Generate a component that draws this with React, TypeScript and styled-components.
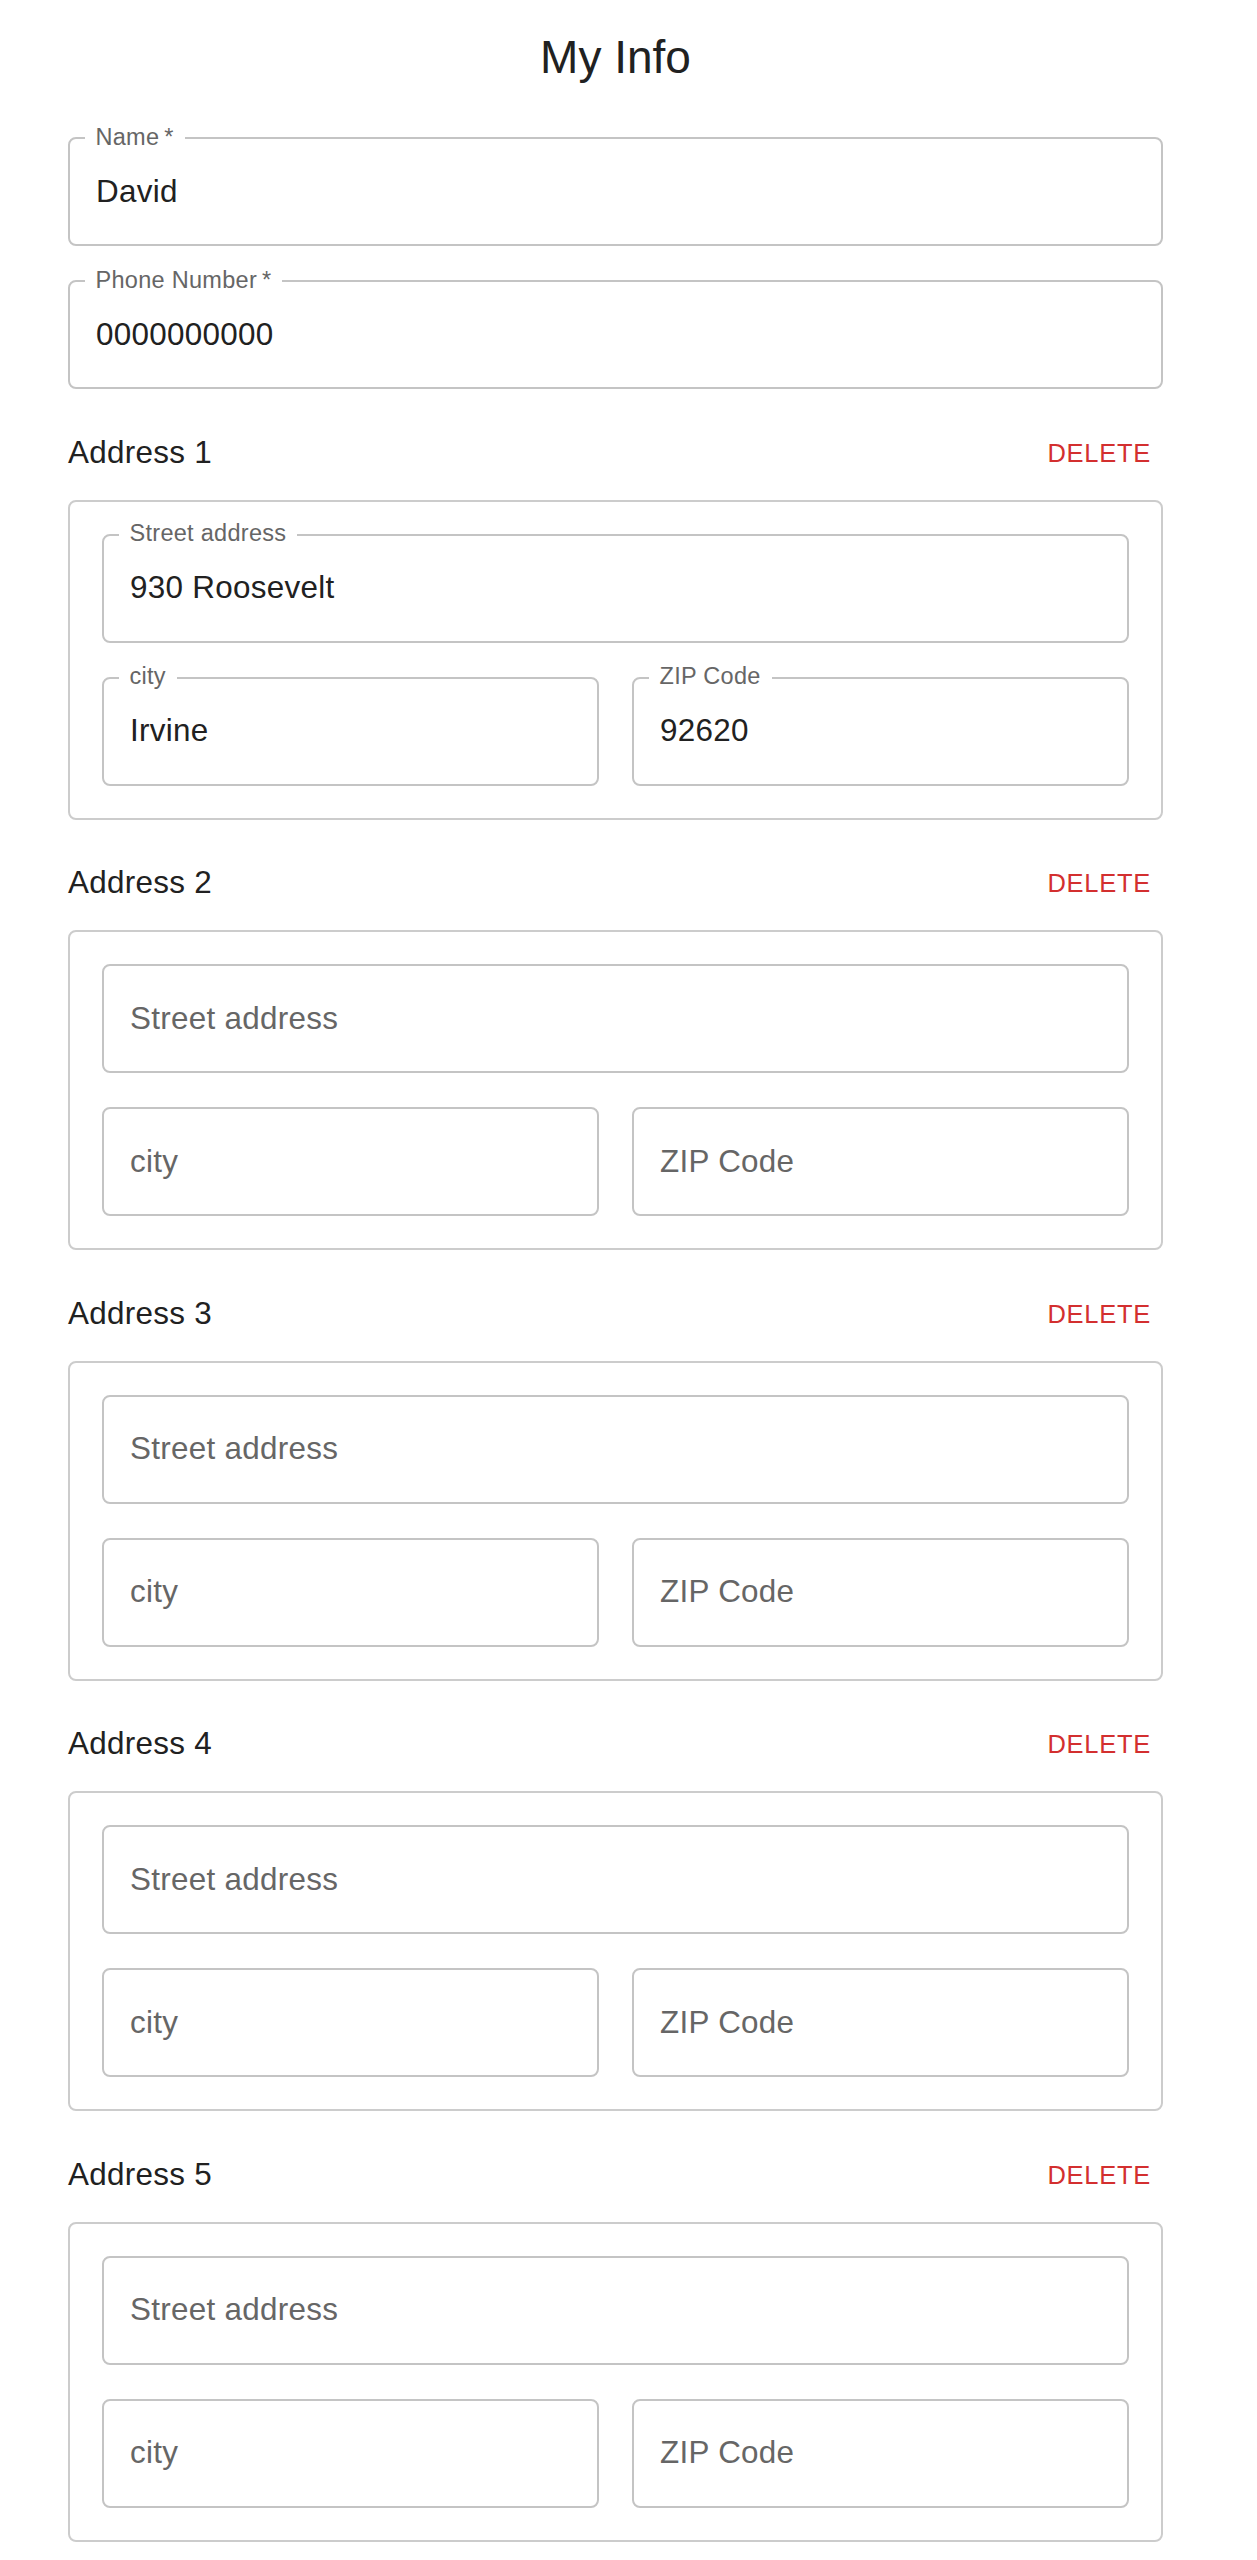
import styled, { createGlobalStyle } from 'styled-components';

const GlobalStyle = createGlobalStyle`
  html,
  body {
    margin: 0;
    padding: 0;
    background: #ffffff;
  }

  body {
    font-family: 'Liberation Sans', Arial, Helvetica, sans-serif;
    color: #212121;
  }
`;

const Page = styled.main`
  width: 1095px;
  padding: 27px 0 40px 68px;
`;

const Title = styled.h1`
  margin: 0 0 50px;
  font-size: 46px;
  line-height: 60px;
  font-weight: 400;
  text-align: center;
  color: #212121;
`;

const FieldBox = styled.div`
  position: relative;
  box-sizing: border-box;
  height: 109px;
  border: 2px solid #c4c4c4;
  border-radius: 8px;
  display: flex;
  align-items: center;
  padding: 0 26px;
`;

const FloatingLabel = styled.label`
  position: absolute;
  top: -14.5px;
  left: 14.5px;
  padding: 0 11px;
  background: #ffffff;
  font-size: 23.5px;
  line-height: 24px;
  letter-spacing: 0.29px;
  color: #666666;
  white-space: nowrap;
`;

const Input = styled.input`
  width: 100%;
  border: none;
  outline: none;
  padding: 0;
  background: transparent;
  font-family: inherit;
  font-size: 31.4px;
  line-height: 40px;
  letter-spacing: 0.29px;
  color: #212121;

  &::placeholder {
    color: #666666;
    opacity: 1;
  }
`;

const Stack = styled.div`
  display: flex;
  flex-direction: column;
  gap: 34px;
`;

const SectionHeader = styled.div`
  display: flex;
  align-items: center;
  justify-content: space-between;
  height: 48px;
  margin: 39.5px 0 23px;
`;

const SectionTitle = styled.h2`
  margin: 0;
  font-size: 31.4px;
  line-height: 48px;
  font-weight: 400;
  letter-spacing: 0.29px;
  color: #212121;
`;

const DeleteButton = styled.button`
  border: none;
  background: none;
  padding: 0 12px;
  font-family: inherit;
  font-size: 25.5px;
  line-height: 48px;
  font-weight: 500;
  letter-spacing: 0.73px;
  text-transform: uppercase;
  color: #d32f2f;
  cursor: pointer;
`;

const AddressCard = styled.div`
  box-sizing: border-box;
  height: 320px;
  border: 2px solid #cccccc;
  border-radius: 8px;
  padding: 32px;
  display: flex;
  flex-direction: column;
  gap: 34px;
`;

const Row = styled.div`
  display: grid;
  grid-template-columns: 1fr 1fr;
  gap: 33px;
`;

type FieldProps = {
  label: string;
  value?: string;
  required?: boolean;
};

function Field({ label, value, required }: FieldProps) {
  const text = required ? `${label}\u2009*` : label;
  return (
    <FieldBox>
      {value !== undefined && <FloatingLabel>{text}</FloatingLabel>}
      {value !== undefined ? (
        <Input defaultValue={value} aria-label={label} />
      ) : (
        <Input placeholder={text} aria-label={label} />
      )}
    </FieldBox>
  );
}

type Address = {
  street?: string;
  city?: string;
  zip?: string;
};

const addresses: Address[] = [
  { street: '930 Roosevelt', city: 'Irvine', zip: '92620' },
  {},
  {},
  {},
  {},
];

function AddressSection({ index, address }: { index: number; address: Address }) {
  return (
    <section>
      <SectionHeader>
        <SectionTitle>Address {index + 1}</SectionTitle>
        <DeleteButton type="button">Delete</DeleteButton>
      </SectionHeader>
      <AddressCard>
        <Field label="Street address" value={address.street} />
        <Row>
          <Field label="city" value={address.city} />
          <Field label="ZIP Code" value={address.zip} />
        </Row>
      </AddressCard>
    </section>
  );
}

function App() {
  return (
    <>
      <GlobalStyle />
      <Page>
        <Title>My Info</Title>
        <Stack>
          <Field label="Name" value="David" required />
          <Field label="Phone Number" value="0000000000" required />
        </Stack>
        {addresses.map((address, i) => (
          <AddressSection key={i} index={i} address={address} />
        ))}
      </Page>
    </>
  );
}

export default App;
